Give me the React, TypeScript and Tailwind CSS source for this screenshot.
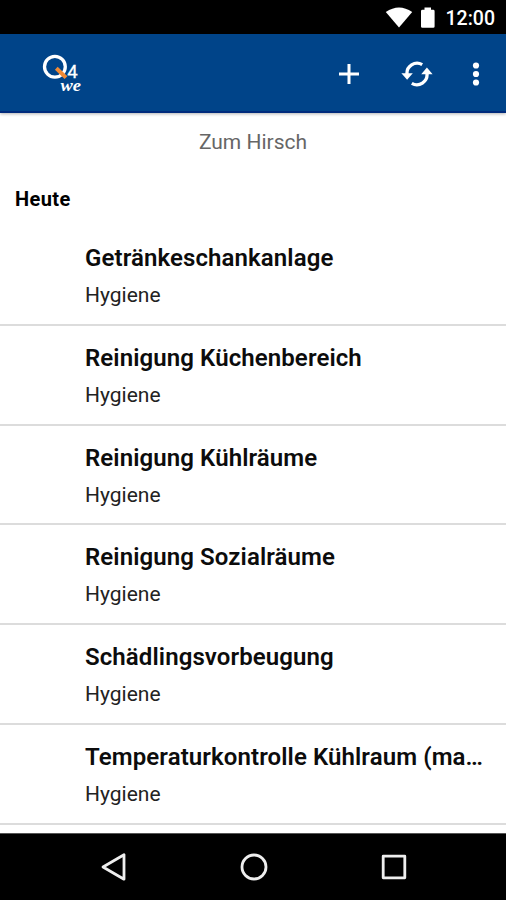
const entries = [
  'Getränkeschankanlage',
  'Reinigung Küchenbereich',
  'Reinigung Kühlräume',
  'Reinigung Sozialräume',
  'Schädlingsvorbeugung',
  'Temperaturkontrolle Kühlraum (ma…',
];

function StatusBar() {
  return (
    <div className="flex h-[34px] shrink-0 items-center justify-end bg-black pt-[2px] pr-[11px] text-white">
      <svg className="mr-[7px] h-[22px] w-[28px]" viewBox="0 0 28 22" fill="#fff">
        <path d="M14 20.5 L0.8 5 Q14 -4 27.2 5 Z" />
      </svg>
      <svg className="mr-[10px] h-[22px] w-[16px]" viewBox="0 0 16 22" fill="#fff">
        <path d="M1 4.2 Q1 2.8 2.4 2.8 H4.5 V0.4 H11 V2.8 H13.2 Q14.6 2.8 14.6 4.2 V19.4 Q14.6 20.8 13.2 20.8 H2.4 Q1 20.8 1 19.4 Z" />
      </svg>
      <span className="pt-[2px] text-[19.5px] leading-none font-medium">12:00</span>
    </div>
  );
}

function Logo() {
  return (
    <svg className="h-[48px] w-[44px]" viewBox="0 0 44 48">
      <circle cx="12.9" cy="16.8" r="10.4" fill="none" stroke="#fff" strokeWidth="3.3" />
      <path d="M14.3 18.3 L24 27.6" stroke="#f08a35" strokeWidth="4" />
      <text x="25.3" y="27.6" fill="#fff" stroke="#fff" strokeWidth="0.3" fontSize="18.5" className="font-['Roboto',sans-serif]">4</text>
      <text x="18.5" y="40.5" fill="#fff" fontSize="17.5" fontStyle="italic" fontWeight="700" textLength="20.5" lengthAdjust="spacingAndGlyphs" className="font-['Liberation_Serif',serif]">we</text>
    </svg>
  );
}

function AppBar() {
  return (
    <header className="relative z-10 flex h-[79px] shrink-0 items-center justify-between border-b-2 border-[#002b7c] bg-[#004489] pt-[3px] pr-[20px] pl-[42px] shadow-[0_1px_3px_rgba(0,0,0,0.3)]">
      <Logo />
      <div className="flex items-center">
        <svg className="mr-[41px] h-[22px] w-[22px]" viewBox="0 0 22 22" stroke="#fff" strokeWidth="3">
          <path d="M11 1 V21 M1 11 H21" />
        </svg>
        <svg className="mr-[33px] h-[26px] w-[32px]" viewBox="0 0 32 26" fill="none" stroke="#fff" strokeWidth="3.3">
          <path d="M21.2 3.6 A10.2 10.2 0 0 0 6 13.5" />
          <path d="M10.8 22.4 A10.2 10.2 0 0 0 26 12.5" />
          <path d="M0.4 12.2 H11.8 L6.1 18.8 Z" fill="#fff" stroke="none" />
          <path d="M20.2 13.2 H31.6 L25.9 6.6 Z" fill="#fff" stroke="none" />
        </svg>
        <svg className="h-[26px] w-[20px]" viewBox="0 0 20 26" fill="#fff">
          <circle cx="10" cy="4.5" r="3.1" />
          <circle cx="10" cy="13" r="3.1" />
          <circle cx="10" cy="21.5" r="3.1" />
        </svg>
      </div>
    </header>
  );
}

function Entry({ title }: { title: string }) {
  return (
    <li className="h-[99.8px] border-b-2 border-[#dcdcdc] pt-[16px] pl-[85px]">
      <div className="text-[24px] leading-[32px] font-semibold tracking-[0.1px] whitespace-nowrap text-[#0c0c0c]">{title}</div>
      <div className="mt-[7px] text-[21px] leading-[28px] text-[#222]">Hygiene</div>
    </li>
  );
}

function NavBar() {
  return (
    <nav className="flex h-[67px] shrink-0 items-center justify-center gap-[111px] border-t border-[#555] bg-black pl-px">
      <svg className="h-[30px] w-[28px]" viewBox="0 0 28 30" fill="none" stroke="#eee" strokeWidth="2.8" strokeLinejoin="round">
        <path d="M3 15 L24 2.8 V27.2 Z" />
      </svg>
      <svg className="h-[30px] w-[30px]" viewBox="0 0 30 30" fill="none" stroke="#eee" strokeWidth="2.8">
        <circle cx="15" cy="15" r="12" />
      </svg>
      <svg className="h-[30px] w-[28px]" viewBox="0 0 28 30" fill="none" stroke="#eee" strokeWidth="2.8" strokeLinejoin="round">
        <rect x="3.2" y="4.2" width="21.6" height="21.6" />
      </svg>
    </nav>
  );
}

export default function App() {
  return (
    <div className="flex h-[900px] w-[506px] flex-col overflow-hidden bg-white font-['Roboto',sans-serif]">
      <StatusBar />
      <AppBar />
      <main className="flex-1 overflow-hidden">
        <p className="pt-[15px] text-center text-[21px] leading-[28px] text-[#666]">Zum Hirsch</p>
        <h2 className="mt-[29px] pl-[15px] text-[20px] leading-[28px] font-bold tracking-[0.4px] text-black">Heute</h2>
        <ul className="mt-[13px]">
          {entries.map((title) => (
            <Entry key={title} title={title} />
          ))}
        </ul>
      </main>
      <NavBar />
    </div>
  );
}
